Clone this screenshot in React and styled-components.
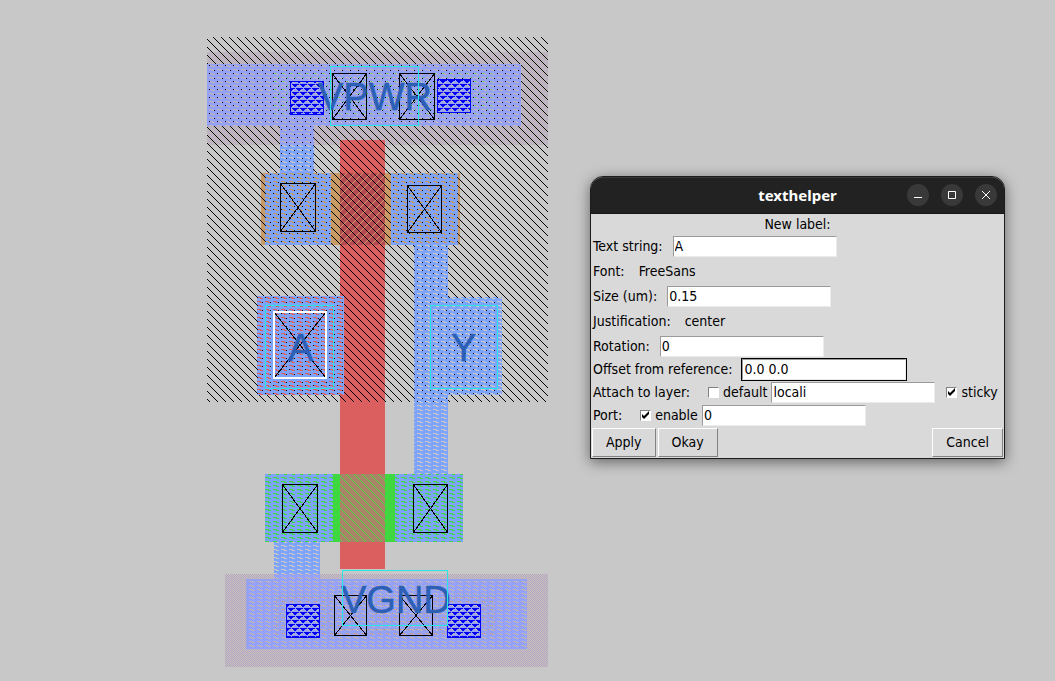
import React, { useState } from "react";
import styled, { createGlobalStyle } from "styled-components";

const GlobalStyle = createGlobalStyle`
  *, *::before, *::after { box-sizing: border-box; }
  body {
    margin: 0;
    background: #c8c8c8;
    color: #000;
    font-family: "DejaVu Sans Condensed", "DejaVu Sans", sans-serif;
    font-size: 14px;
  }
`;

const Desktop = styled.main`
  position: relative;
  min-height: 100vh;
  overflow: hidden;
`;

const Viewport = styled.section`
  padding: 37px 0 0 207px;
`;

const Drawing = styled.svg`
  display: block;
  width: 341px;
  height: 644px;
  shape-rendering: crispEdges;
`;

const LabelText = styled.text`
  fill: #2c5fb6;
  stroke: #2c5fb6;
  stroke-width: 0.5px;
  font-family: "Liberation Sans", Arial, sans-serif;
  font-size: 38px;
`;

/* Stipples are written as rows of cells; "#" is ink, "o" the second ink. */
const stipples = {
  nwell: { color: "#000", rows: ["#.......", ".#......", "..#.....", "...#....", "....#...", ".....#..", "......#.", ".......#"] },
  locali: { color: "#7ea4fa", rows: ["########", "#....###", "####...#", "########"] },
  localiWell: { color: "#86a4fa", second: "#a09ff0", rows: ["#o#o#o#o", "o....#o#", "#o#o...o", "o#o#o#o#"] },
  well: { color: "#b6a4c8", second: "#c6c4b8", rows: ["#o", "o#"] },
  ngate: { color: "#44d844", rows: ["#.......", ".#......", "..#.....", "...#....", "....#...", ".....#..", "......#.", ".......#"] },
  pgate: { color: "#cb9b69", rows: [".......#", "......#.", ".....#..", "....#...", "...#....", "..#.....", ".#......", "#......."] },
  metal: { color: "#0000f5", rows: ["#######.", ".####...", "..##....", "........", "###.####", "#....###", "......##", "........"] },
  taps: { color: "#44d844", rows: ["........", "...#....", "........", "........", "........", ".......#", "........", "........"] },
  taps2: { color: "#d09a70", rows: ["........", "..#.#...", "........", "........", "........", "#.....#.", "........", "........"] },
};

function Stipple({ name }) {
  const { rows, color, second } = stipples[name];
  const cells = (ink) =>
    rows
      .flatMap((row, y) => [...row].map((c, x) => (c === ink ? `M${x} ${y}h1v1h-1z` : "")))
      .join("");
  return (
    <pattern id={name} width={rows[0].length} height={rows.length} patternUnits="userSpaceOnUse">
      <path d={cells("#")} fill={color} />
      {second && <path d={cells("o")} fill={second} />}
    </pattern>
  );
}

function Area({ x1, y1, x2, y2, fill }) {
  return <rect x={x1} y={y1} width={x2 - x1} height={y2 - y1} fill={fill} />;
}

function Frame({ x1, y1, x2, y2, color, weight = 1 }) {
  const h = weight / 2;
  return (
    <rect
      x={x1 + h}
      y={y1 + h}
      width={x2 - x1 - weight}
      height={y2 - y1 - weight}
      fill="none"
      stroke={color}
      strokeWidth={weight}
    />
  );
}

function Contact({ x1, y1, x2, y2 }) {
  return (
    <g stroke="#000" fill="none">
      <rect x={x1 + 0.5} y={y1 + 0.5} width={x2 - x1 - 1} height={y2 - y1 - 1} />
      <path d={`M${x1} ${y1}L${x2} ${y2}M${x2} ${y1}L${x1} ${y2}`} />
    </g>
  );
}

function Via({ x, y }) {
  return (
    <g>
      <Area x1={x} y1={y} x2={x + 34} y2={y + 34} fill="url(#metal)" />
      <Frame x1={x} y1={y} x2={x + 34} y2={y + 34} color="#0000f5" />
    </g>
  );
}

function CellLayout() {
  return (
    <Drawing viewBox="207 37 341 644" role="img" aria-label="Inverter cell layout">
      <defs>
        {Object.keys(stipples).map((name) => (
          <Stipple key={name} name={name} />
        ))}
      </defs>

      <Area x1={207} y1={52} x2={548} y2={145} fill="url(#well)" />
      <Area x1={225} y1={574} x2={548} y2={667} fill="url(#well)" />
      <Area x1={261} y1={173} x2={460} y2={245} fill="#c89b66" />
      <Area x1={265} y1={474} x2={463} y2={542} fill="#40d840" />
      <Area x1={340} y1={140} x2={385} y2={569} fill="#dc5f5f" />
      <Area x1={257} y1={296} x2={344} y2={395} fill="#dc5f5f" />
      <Area x1={340} y1={173} x2={385} y2={245} fill="#b54a55" />
      <Area x1={340} y1={173} x2={385} y2={245} fill="url(#pgate)" />
      <Area x1={340} y1={474} x2={385} y2={542} fill="#a98467" />
      <Area x1={340} y1={474} x2={385} y2={542} fill="url(#ngate)" />
      <Area x1={207} y1={37} x2={548} y2={402} fill="url(#nwell)" />

      <Area x1={207} y1={64} x2={521} y2={126} fill="url(#localiWell)" />
      <Area x1={280} y1={126} x2={314} y2={145} fill="url(#localiWell)" />
      <Area x1={280} y1={145} x2={314} y2={173} fill="url(#locali)" />
      <Area x1={265} y1={173} x2={331} y2={245} fill="url(#locali)" />
      <Area x1={391} y1={173} x2={458} y2={245} fill="url(#locali)" />
      <Area x1={414} y1={245} x2={448} y2={474} fill="url(#locali)" />
      <Area x1={448} y1={297} x2={502} y2={395} fill="url(#locali)" />
      <Area x1={257} y1={296} x2={344} y2={395} fill="url(#locali)" />
      <Area x1={265} y1={474} x2={333} y2={542} fill="url(#locali)" />
      <Area x1={395} y1={474} x2={463} y2={542} fill="url(#locali)" />
      <Area x1={274} y1={542} x2={320} y2={574} fill="url(#locali)" />
      <Area x1={274} y1={574} x2={320} y2={579} fill="url(#localiWell)" />
      <Area x1={246} y1={579} x2={527} y2={649} fill="url(#localiWell)" />

      <Area x1={272} y1={70} x2={492} y2={115} fill="url(#taps)" />
      <Area x1={276} y1={595} x2={495} y2={637} fill="url(#taps2)" />

      <Via x={290} y={81} />
      <Via x={437} y={79} />
      <Via x={286} y={604} />
      <Via x={447} y={604} />

      <Contact x1={332} y1={73} x2={367} y2={120} />
      <Contact x1={399} y1={73} x2={435} y2={120} />
      <Contact x1={280} y1={183} x2={316} y2={232} />
      <Contact x1={407} y1={185} x2={442} y2={233} />
      <Contact x1={274} y1={312} x2={326} y2={378} />
      <Contact x1={282} y1={484} x2={318} y2={533} />
      <Contact x1={413} y1={484} x2={448} y2={533} />
      <Contact x1={334} y1={595} x2={367} y2={636} />
      <Contact x1={399} y1={595} x2={433} y2={636} />

      <LabelText x="318" y="110">VPWR</LabelText>
      <LabelText x="341" y="613">VGND</LabelText>
      <LabelText x="288" y="361">A</LabelText>
      <LabelText x="451" y="361">Y</LabelText>

      <Frame x1={330} y1={66} x2={419} y2={126} color="#28e6e6" />
      <Frame x1={265} y1={305} x2={334} y2={389} color="#28e6e6" />
      <Frame x1={430} y1={305} x2={498} y2={389} color="#28e6e6" />
      <Frame x1={342} y1={570} x2={448} y2={626} color="#28e6e6" />
      <Frame x1={273} y1={311} x2={327} y2={379} color="#fff" weight={2} />
    </Drawing>
  );
}

const Window = styled.section`
  position: absolute;
  left: 590px;
  top: 176px;
  width: 415px;
  border: 1px solid #1c1c1c;
  border-radius: 13px 13px 0 0;
  background: #d9d9d9;
  box-shadow: 0 3px 14px rgba(0, 0, 0, 0.5);
`;

const TitleBar = styled.header`
  display: grid;
  grid-template-columns: 1fr auto 1fr;
  align-items: center;
  height: 37px;
  padding: 0 7px 2px;
  border-top: 1px solid #383838;
  border-bottom: 1px solid #171717;
  border-radius: 12px 12px 0 0;
  background: #222;
`;

const Title = styled.h1`
  grid-column: 2;
  margin: 0;
  color: #fff;
  font: bold 15px "Noto Sans", sans-serif;
`;

const WindowButtons = styled.div`
  display: flex;
  justify-content: flex-end;
  gap: 12px;
`;

const WindowButton = styled.button`
  width: 22px;
  height: 22px;
  padding: 0;
  border: 0;
  border-radius: 50%;
  background: #393939;
  svg { display: block; }
`;

const Heading = styled.h2`
  margin: 0;
  height: 19px;
  font-size: 14px;
  font-weight: normal;
  line-height: 20px;
  text-align: center;
`;

const Row = styled.div`
  display: flex;
  align-items: center;
  height: ${(p) => (p.$compact ? 23 : 25)}px;
  padding: ${(p) => (p.$compact ? "1px 2px" : "3px 2px 1px")};
  white-space: nowrap;
`;

const Caption = styled.span`
  padding-bottom: 2px;
`;

const FieldName = styled.label`
  margin-right: ${(p) => p.$gap || 10}px;
  padding-bottom: 2px;
`;

const Entry = styled.input`
  width: 164px;
  height: 21px;
  padding: 0 1px 2px;
  border: 1px solid;
  border-color: #9a9a9a #ececec #ececec #9a9a9a;
  border-radius: 0;
  outline: ${(p) => (p.$active ? "1px solid #000" : "none")};
  background: #fff;
  color: #000;
  font: inherit;
`;

const Check = styled.label`
  display: flex;
  align-items: center;
  gap: 4px;
  margin-left: ${(p) => (p.$trailing ? 11 : 0)}px;
  margin-right: ${(p) => (p.$trailing ? 0 : 4)}px;
`;

const Tick = styled.input`
  appearance: none;
  width: 11px;
  height: 11px;
  margin: 0;
  border: 1px solid;
  border-color: #828282 #fff #fff #828282;
  background: #fff;
  &:checked {
    background: #fff
      url("data:image/svg+xml,%3Csvg xmlns='http://www.w3.org/2000/svg' viewBox='0 0 9 9'%3E%3Cpath d='M1 3l2 2 5-5v3L3 8 1 6z'/%3E%3C/svg%3E")
      center / 9px 9px no-repeat;
  }
`;

const Actions = styled.footer`
  display: flex;
  gap: 2px;
  padding: 1px;
`;

const Action = styled.button`
  height: 29px;
  padding: 0 13px 2px;
  border: 1px solid;
  border-color: #fff #828282 #828282 #fff;
  border-radius: 0;
  background: #d9d9d9;
  color: #000;
  font: inherit;
  margin-left: ${(p) => (p.$end ? "auto" : 0)};
`;

function CheckField({ label, initial, trailing }) {
  const [on, setOn] = useState(initial);
  return (
    <Check $trailing={trailing}>
      <Tick type="checkbox" checked={on} onChange={() => setOn(!on)} />
      <Caption>{label}</Caption>
    </Check>
  );
}

function Glyph({ d }) {
  return (
    <svg width="22" height="22" viewBox="0 0 22 22" fill="none" stroke="#fff" aria-hidden="true">
      <path d={d} />
    </svg>
  );
}

function TextHelper() {
  return (
    <Window>
      <TitleBar>
        <Title>texthelper</Title>
        <WindowButtons>
          <WindowButton aria-label="Minimize"><Glyph d="M7 13.5h8" /></WindowButton>
          <WindowButton aria-label="Maximize"><Glyph d="M7.5 7.5h7v7h-7z" /></WindowButton>
          <WindowButton aria-label="Close"><Glyph d="M7 7l8 8M15 7l-8 8" /></WindowButton>
        </WindowButtons>
      </TitleBar>
      <Heading>New label:</Heading>
      <Row>
        <FieldName htmlFor="text">Text string:</FieldName>
        <Entry id="text" defaultValue="A" />
      </Row>
      <Row>
        <FieldName as="span" $gap={14}>Font:</FieldName>
        <Caption>FreeSans</Caption>
      </Row>
      <Row>
        <FieldName htmlFor="size">Size (um):</FieldName>
        <Entry id="size" defaultValue="0.15" />
      </Row>
      <Row>
        <FieldName as="span" $gap={14}>Justification:</FieldName>
        <Caption>center</Caption>
      </Row>
      <Row>
        <FieldName htmlFor="rotation">Rotation:</FieldName>
        <Entry id="rotation" defaultValue="0" />
      </Row>
      <Row $compact>
        <FieldName htmlFor="offset">Offset from reference:</FieldName>
        <Entry id="offset" defaultValue="0.0 0.0" $active />
      </Row>
      <Row $compact>
        <FieldName htmlFor="layer" $gap={18}>Attach to layer:</FieldName>
        <CheckField label="default" initial={false} />
        <Entry id="layer" defaultValue="locali" />
        <CheckField label="sticky" initial trailing />
      </Row>
      <Row $compact>
        <FieldName htmlFor="port" $gap={18}>Port:</FieldName>
        <CheckField label="enable" initial />
        <Entry id="port" defaultValue="0" />
      </Row>
      <Actions>
        <Action>Apply</Action>
        <Action>Okay</Action>
        <Action $end>Cancel</Action>
      </Actions>
    </Window>
  );
}

export default function App() {
  return (
    <>
      <GlobalStyle />
      <Desktop>
        <Viewport>
          <CellLayout />
        </Viewport>
        <TextHelper />
      </Desktop>
    </>
  );
}
